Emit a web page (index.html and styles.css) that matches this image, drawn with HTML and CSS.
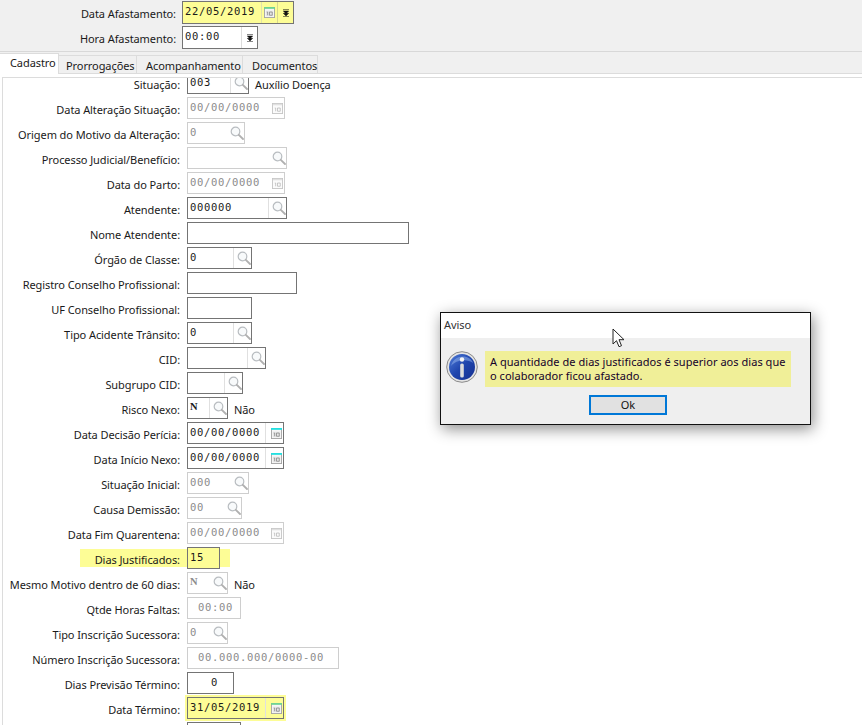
FILE: index.html
```html
<!DOCTYPE html>
<html lang="pt">
<head>
<meta charset="utf-8">
<title>Afastamento</title>
<link rel="stylesheet" href="styles.css">
</head>
<body>
<svg class="defs" width="0" height="0" aria-hidden="true">
  <symbol id="lupa" viewBox="0 0 14 14">
    <circle cx="5.500" cy="5.500" r="4.300" fill="#f8fafb" stroke="#b9bdc1" stroke-width="1.200"/>
    <path d="M8.800 8.800l4.200 4.200" stroke="#b0b0b0" stroke-width="1.800" stroke-linecap="round"/>
  </symbol>
  <symbol id="cal" viewBox="0 0 12 12">
    <rect x=".5" y=".5" width="11" height="11" fill="#f6f6f6" stroke="#a4a4a4"/>
    <rect x="0" y="0" width="12" height="2" fill="currentColor"/>
    <rect x="2" y="4" width="8" height="6" fill="#e6e6e6"/>
    <path d="M3 5.500h1v3.500M6 5.500h3v3.500H6z" fill="none" stroke="#808080" stroke-width=".8"/>
  </symbol>
  <symbol id="cald" viewBox="0 0 12 12">
    <rect x=".5" y=".5" width="11" height="11" fill="#fbfbfb" stroke="#c6c6c6"/>
    <rect x="1" y="1" width="10" height="1.500" fill="#e0e0e0"/>
    <path d="M3 5.500h1v3.500M6 5.500h3v3.500H6z" fill="none" stroke="#b5b5b5" stroke-width=".8"/>
  </symbol>
  <symbol id="spin" viewBox="0 0 6 8">
    <path d="M0 .5h6M.3 2h5.400L3 4.700zM.3 4.300h5.400L3 7zM0 7.500h6" fill="#111" stroke="#111" stroke-width=".5"/>
  </symbol>
</svg>

<header class="topo">
  <div class="topo-linha">
    <span class="topo-rotulo">Data Afastamento:</span>
    <span class="campo campo-topo amarelo w112">
      <span class="valor">22/05/2019</span>
      <span class="btn btn-cal verde"><svg class="i12"><use href="#cal"/></svg></span>
      <span class="btn btn-spin"><svg class="i-spin"><use href="#spin"/></svg></span>
    </span>
  </div>
  <div class="topo-linha">
    <span class="topo-rotulo">Hora Afastamento:</span>
    <span class="campo campo-topo w76">
      <span class="valor">00:00</span>
      <span class="btn btn-spin larga"><svg class="i-spin"><use href="#spin"/></svg></span>
    </span>
  </div>
</header>

<nav class="abas">
  <span class="aba ativa">Cadastro</span>
  <span class="aba w78">Prorrogações</span>
  <span class="aba w106">Acompanhamento</span>
  <span class="aba w75">Documentos</span>
</nav>

<main class="painel">
  <div class="quadro">
  <div class="linhas">
    <div class="linha"><span class="rotulo">Situação:</span><span class="campo w62"><span class="valor">003</span><span class="btn div"><svg class="i14"><use href="#lupa"/></svg></span></span><span class="extra">Auxílio Doença</span></div>
    <div class="linha"><span class="rotulo">Data Alteração Situação:</span><span class="campo off w98"><span class="valor">00/00/0000</span><span class="btn"><svg class="i12"><use href="#cald"/></svg></span></span></div>
    <div class="linha"><span class="rotulo">Origem do Motivo da Alteração:</span><span class="campo off w58"><span class="valor">0</span><span class="btn"><svg class="i14"><use href="#lupa"/></svg></span></span></div>
    <div class="linha"><span class="rotulo">Processo Judicial/Benefício:</span><span class="campo off w100"><span class="valor"></span><span class="btn"><svg class="i14"><use href="#lupa"/></svg></span></span></div>
    <div class="linha"><span class="rotulo">Data do Parto:</span><span class="campo off w98"><span class="valor">00/00/0000</span><span class="btn"><svg class="i12"><use href="#cald"/></svg></span></span></div>
    <div class="linha"><span class="rotulo">Atendente:</span><span class="campo w100"><span class="valor">000000</span><span class="btn div"><svg class="i14"><use href="#lupa"/></svg></span></span></div>
    <div class="linha"><span class="rotulo">Nome Atendente:</span><span class="campo w222"></span></div>
    <div class="linha"><span class="rotulo">Órgão de Classe:</span><span class="campo w65"><span class="valor">0</span><span class="btn div"><svg class="i14"><use href="#lupa"/></svg></span></span></div>
    <div class="linha"><span class="rotulo">Registro Conselho Profissional:</span><span class="campo w110"></span></div>
    <div class="linha"><span class="rotulo">UF Conselho Profissional:</span><span class="campo w65"></span></div>
    <div class="linha"><span class="rotulo">Tipo Acidente Trânsito:</span><span class="campo w65"><span class="valor">0</span><span class="btn div"><svg class="i14"><use href="#lupa"/></svg></span></span></div>
    <div class="linha"><span class="rotulo">CID:</span><span class="campo w79"><span class="valor"></span><span class="btn div"><svg class="i14"><use href="#lupa"/></svg></span></span></div>
    <div class="linha"><span class="rotulo">Subgrupo CID:</span><span class="campo w56"><span class="valor"></span><span class="btn div"><svg class="i14"><use href="#lupa"/></svg></span></span></div>
    <div class="linha"><span class="rotulo">Risco Nexo:</span><span class="campo w41"><span class="valor serifa">N</span><span class="btn div"><svg class="i14"><use href="#lupa"/></svg></span></span><span class="extra">Não</span></div>
    <div class="linha"><span class="rotulo">Data Decisão Perícia:</span><span class="campo w97"><span class="valor">00/00/0000</span><span class="btn div ciano"><svg class="i12"><use href="#cal"/></svg></span></span></div>
    <div class="linha"><span class="rotulo">Data Início Nexo:</span><span class="campo w97"><span class="valor">00/00/0000</span><span class="btn div ciano"><svg class="i12"><use href="#cal"/></svg></span></span></div>
    <div class="linha"><span class="rotulo">Situação Inicial:</span><span class="campo off w62"><span class="valor">000</span><span class="btn"><svg class="i14"><use href="#lupa"/></svg></span></span></div>
    <div class="linha"><span class="rotulo">Causa Demissão:</span><span class="campo off w55"><span class="valor">00</span><span class="btn"><svg class="i14"><use href="#lupa"/></svg></span></span></div>
    <div class="linha"><span class="rotulo">Data Fim Quarentena:</span><span class="campo off w97"><span class="valor">00/00/0000</span><span class="btn"><svg class="i12"><use href="#cald"/></svg></span></span></div>
    <div class="linha"><span class="rotulo"><span class="marca">Dias Justificados:</span></span><span class="campo amarelo w33"><span class="valor">15</span></span><span class="marca-fim"></span></div>
    <div class="linha"><span class="rotulo">Mesmo Motivo dentro de 60 dias:</span><span class="campo off w41"><span class="valor serifa">N</span><span class="btn"><svg class="i14"><use href="#lupa"/></svg></span></span><span class="extra">Não</span></div>
    <div class="linha"><span class="rotulo">Qtde Horas Faltas:</span><span class="campo off w54"><span class="valor recuo">00:00</span></span></div>
    <div class="linha"><span class="rotulo">Tipo Inscrição Sucessora:</span><span class="campo off w41"><span class="valor">0</span><span class="btn"><svg class="i14"><use href="#lupa"/></svg></span></span></div>
    <div class="linha"><span class="rotulo">Número Inscrição Sucessora:</span><span class="campo off w152"><span class="valor recuo">00.000.000/0000-00</span></span></div>
    <div class="linha"><span class="rotulo">Dias Previsão Término:</span><span class="campo w47"><span class="valor recuo2">0</span></span></div>
    <div class="linha"><span class="rotulo">Data Término:</span><span class="moldura"><span class="campo amarelo w97"><span class="valor">31/05/2019</span><span class="btn div verde"><svg class="i12"><use href="#cal"/></svg></span></span></span></div>
    <div class="linha"><span class="rotulo"></span><span class="campo w54"></span></div>
  </div>
  </div>
</main>

<section class="aviso" role="dialog">
  <div class="aviso-titulo">Aviso</div>
  <div class="aviso-corpo">
    <div class="aviso-msg">
      <svg class="info" viewBox="0 0 32 32">
        <defs>
          <linearGradient id="azul" x1="0" y1="0" x2="1" y2="1">
            <stop offset="0" stop-color="#4f7cd8"/>
            <stop offset=".5" stop-color="#1f45ad"/>
            <stop offset="1" stop-color="#152f90"/>
          </linearGradient>
        </defs>
        <circle cx="16" cy="16" r="15.300" fill="#e4e4e4" stroke="#8a8a8a"/>
        <circle cx="16" cy="16" r="13" fill="url(#azul)"/>
        <path d="M5 15C9 9 21 7 27 12C24 3 8 3 5 15z" fill="#8fb0ea" opacity=".55"/>
        <circle cx="16" cy="8.500" r="2.200" fill="#f4f4f4"/>
        <rect x="14.200" y="12.500" width="3.600" height="14" rx="1.600" fill="#dcdcdc"/>
      </svg>
      <p class="aviso-texto">A quantidade de dias justificados é superior aos dias que o colaborador ficou afastado.</p>
    </div>
    <div class="aviso-acoes"><button class="ok" type="button">Ok</button></div>
  </div>
</section>

<svg class="cursor" viewBox="0 0 14 20" aria-hidden="true">
  <path d="M1 1v15l3.500-3.300 2.500 6 2.500-1-2.500-6h5z" fill="#fff" stroke="#222" stroke-width="1"/>
</svg>
</body>
</html>
```

FILE: styles.css
```css
* { box-sizing: border-box; }
html, body { margin: 0; height: 725px; overflow: hidden; }
body {
  position: relative;
  background: #f0f0f0;
  color: #1a1a1a;
  font: 11px/14px "Noto Sans", "DejaVu Sans", sans-serif;
  letter-spacing: -.08px;
}
.defs { position: absolute; }

.topo {
  height: 52px;
  padding-top: 1px;
  border-bottom: 1px solid #d8d8d8;
  display: flex;
  flex-direction: column;
  gap: 3px;
}
.topo-linha { display: flex; height: 22px; }
.topo-rotulo { width: 176px; margin-right: 6px; text-align: right; padding-top: 6px; }
.campo {
  display: flex;
  flex: none;
  height: 22px;
  background: #fff;
  border: 1px solid #747474;
}
.campo-topo { height: 23px; }
.amarelo { background: #fdfd96; }
.off { border-color: #cecece; color: #8c8c8c; }
.valor {
  flex: 1;
  padding: 1px 2px 0;
  font: 10.500px/17px "DejaVu Sans Mono", "Liberation Mono", monospace;
  letter-spacing: .68px;
  overflow: hidden;
  white-space: nowrap;
}
.serifa { font: bold 10.500px/15px "Liberation Serif", serif; letter-spacing: 0; }
.recuo { padding-left: 10px; }
.recuo2 { padding-left: 23px; }
.btn { flex: none; width: 18px; display: flex; align-items: center; justify-content: flex-end; }
.div { border-left: 1px solid #e0e0e0; }
.btn-cal { width: 16px; justify-content: center; border-left: 1px solid #e2e2a8; }
.btn-spin { width: 16px; justify-content: center; border-left: 1px solid #d8d88e; }
.larga { border-left-color: #dcdcdc; }
.verde { color: #6fd391; }
.ciano { color: #22dfe0; }
.i14 { width: 14px; height: 14px; }
.i12 { width: 11px; height: 11px; margin-right: 1px; }
.i-spin { width: 6px; height: 8px; }

.w33 { width: 33px; } .w41 { width: 41px; } .w47 { width: 47px; }
.w54 { width: 54px; } .w55 { width: 55px; } .w56 { width: 56px; }
.w58 { width: 58px; } .w62 { width: 62px; } .w65 { width: 65px; }
.w76 { width: 76px; } .w79 { width: 79px; } .w97 { width: 97px; }
.w98 { width: 98px; } .w100 { width: 100px; } .w110 { width: 110px; }
.w112 { width: 112px; } .w152 { width: 152px; } .w222 { width: 222px; }

.abas { display: flex; height: 21px; }
.aba {
  height: 18px;
  margin-top: 3px;
  padding-left: 9px;
  line-height: 19px;
  background: #f0f0f0;
  border: 1px solid #dcdcdc;
  border-width: 1px 1px 0 0;
}
.ativa {
  position: relative;
  width: 59px;
  height: 21px;
  margin-top: 1px;
  padding-left: 10px;
  background: #fff;
  line-height: 18px;
}
.w78 { width: 78px; padding-left: 7px; } .w106 { width: 106px; } .w75 { width: 75px; }

.painel {
  height: 652px;
  padding: 3px 0 0 2px;
  background: #fff;
  border-top: 1px solid #dcdcdc;
}
.quadro {
  height: 100%;
  border-left: 1px solid #dcdcdc;
  border-top: 1px solid #dcdcdc;
  overflow: hidden;
}
.linhas { display: flex; flex-direction: column; gap: 3px; margin-top: -6px; }
.linha { display: flex; flex: none; height: 22px; align-items: flex-start; }
.rotulo { width: 177px; margin-right: 7px; flex: none; text-align: right; padding-top: 6px; white-space: nowrap; }
.extra { margin-left: 6px; padding-top: 6px; }
.marca { display: inline-block; height: 18px; margin: -4px -7px 0 0; padding: 4px 7px 0 15px; background: #fdfd96; }
.marca-fim { width: 10px; height: 18px; margin-top: 2px; background: #fdfd96; }
.moldura { display: flex; padding: 2px; margin: -2px; background: #fdfd96; }

.aviso {
  position: absolute;
  left: 440px;
  top: 312px;
  width: 371px;
  height: 113px;
  border: 1px solid #111;
  background: #efefef;
  box-shadow: 2px 4px 14px rgba(0, 0, 0, .45);
}
.aviso-titulo { height: 25px; background: #fff; padding: 5px 0 0 3px; color: #333; }
.aviso-corpo { padding: 13px 19px 0 5px; }
.aviso-msg { display: flex; align-items: flex-start; gap: 7px; }
.info { width: 32px; height: 32px; flex: none; }
.aviso-texto {
  flex: 1;
  height: 36px;
  margin: 0;
  padding: 4px 2px 4px 5px;
  background: #f0ef98;
  color: #14002a;
  line-height: 14px;
  letter-spacing: .04px;
}
.aviso-acoes { display: flex; justify-content: center; margin: 8px 0 0 19px; }
.ok {
  width: 78px;
  height: 20px;
  padding: 0;
  background: #e1e1e1;
  border: 2px solid #0078d7;
  font: inherit;
  letter-spacing: inherit;
  color: #111;
}

.cursor { position: absolute; left: 612px; top: 328px; width: 14px; height: 20px; }
```
